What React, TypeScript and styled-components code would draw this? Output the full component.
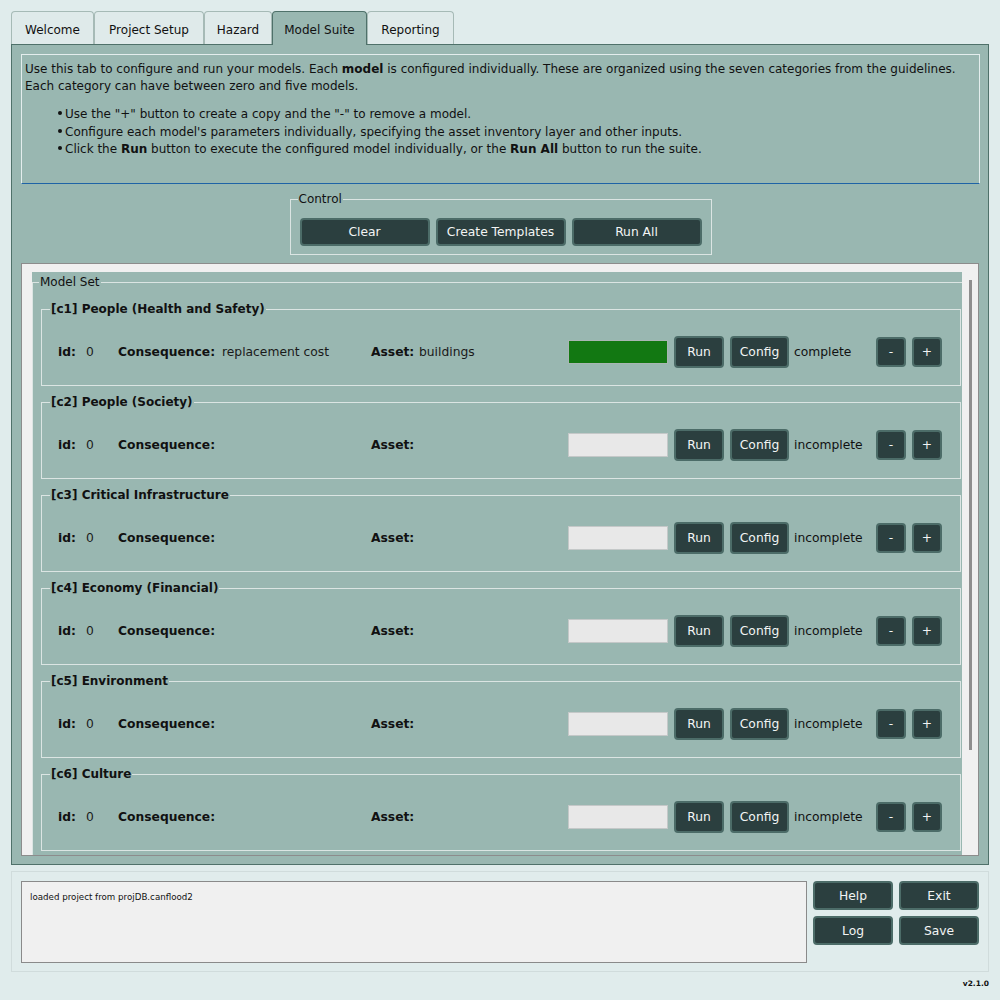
import React from "react";
import styled, { createGlobalStyle } from "styled-components";

const Global = createGlobalStyle`
  html, body { margin: 0; padding: 0; background: #e0ecec; }
  body { font-family: "DejaVu Sans", "Liberation Sans", sans-serif; color: #111; }
  * { box-sizing: border-box; }
`;

const Page = styled.div`
  width: 1000px;
  height: 1000px;
  padding: 11px 11px 0 11px;
  display: flex;
  flex-direction: column;
`;

const TabBar = styled.div`
  display: flex;
  height: 33px;
  align-items: flex-start;
`;

const Tab = styled.div<{ $w: number; $active?: boolean }>`
  width: ${(p) => p.$w}px;
  height: ${(p) => (p.$active ? 34 : 33)}px;
  margin-bottom: ${(p) => (p.$active ? -1 : 0)}px;
  position: relative;
  z-index: ${(p) => (p.$active ? 2 : 1)};
  display: flex;
  align-items: center;
  justify-content: center;
  padding-top: ${(p) => (p.$active ? 3 : 3)}px;
  font-size: 12px;
  color: #111;
  background: ${(p) => (p.$active ? "#99b7b1" : "#dfeaea")};
  border: 1px solid ${(p) => (p.$active ? "#4f716a" : "#a6bab6")};
  border-bottom: none;
  border-radius: 4px 4px 0 0;
`;

const Panel = styled.div`
  height: 821px;
  border: 1px solid #4f716a;
  background: #99b7b1;
  padding: 9px 8px 8px 9px;
  display: flex;
  flex-direction: column;
`;

const InfoBox = styled.div`
  height: 130px;
  flex: none;
  border: 1px solid #e4eded;
  border-bottom-color: #1f63a6;
  padding: 6px 3px 4px 3px;
  font-size: 12px;
  line-height: 17px;
  color: #111;
`;

const Para = styled.p`
  margin: 0;
`;

const BulletList = styled.ul`
  list-style: none;
  margin: 11px 0 0 0;
  padding: 0 0 0 40px;
  line-height: 17.5px;
`;

const Bullet = styled.li`
  &::before {
    content: "";
    display: inline-block;
    width: 4px;
    height: 4px;
    border-radius: 50%;
    background: #111;
    margin: 0 3px 3px -7px;
    vertical-align: middle;
  }
`;

const Group = styled.fieldset<{ $w?: number }>`
  margin: 0;
  min-width: 0;
  border: 1px solid #dbe5e3;
  ${(p) => (p.$w ? `width: ${p.$w}px;` : "")}
`;

const GroupTitle = styled.legend<{ $bold?: boolean; $offset: number }>`
  margin-left: ${(p) => p.$offset}px;
  padding: 0 1px;
  font-size: 12px;
  line-height: ${(p) => (p.$bold ? 16 : 14)}px;
  font-weight: ${(p) => (p.$bold ? 700 : 400)};
  color: #111;
`;

const ControlGroup = styled(Group)`
  margin-top: 8px;
  align-self: center;
  padding: 12px 9px 8px 9px;
  flex: none;
`;

const ButtonRow = styled.div`
  display: flex;
  gap: 6px;
`;

const DarkButton = styled.button<{ $w: number; $h: number }>`
  width: ${(p) => p.$w}px;
  height: ${(p) => p.$h}px;
  background: #2b3f3f;
  border: 2px solid #4c6c68;
  border-radius: 4px;
  color: #f2f4f4;
  font-family: "DejaVu Sans", sans-serif;
  font-size: 12.3px;
  padding: 0;
  display: flex;
  align-items: center;
  justify-content: center;
`;

const ScrollFrame = styled.div`
  margin-top: 8px;
  margin-right: 1px;
  flex: 1;
  min-height: 0;
  border: 1px solid #8c8c8c;
  background: #f0f0f0;
  display: flex;
`;

const Viewport = styled.div`
  flex: 1;
  padding: 8px 0 0 10px;
  overflow: hidden;
`;

const Content = styled.div`
  width: 938px;
  background: #99b7b1;
  padding-top: 3px;
  min-height: 600px;
`;

const ModelSet = styled(Group)`
  padding: 12px 8px 8px 8px;
`;

const Category = styled(Group)`
  width: 920px;
  padding: 19px 0 17px 16px;
  & + & {
    margin-top: 8px;
  }
`;

const Row = styled.div`
  display: grid;
  grid-template-columns: 28px 32px 104px 149px 48px 149px 106px 56px 64px 82px 36px 30px;
  align-items: center;
  height: 32px;
`;

const FieldLabel = styled.span`
  font-size: 12.3px;
  font-weight: 700;
  color: #111;
  white-space: nowrap;
`;

const FieldValue = styled.span`
  font-size: 12.3px;
  color: #1a1a1a;
  white-space: nowrap;
`;

const Progress = styled.div<{ $done: boolean }>`
  width: 100px;
  height: 24px;
  border: 1px solid ${(p) => (p.$done ? "#a9b6b3" : "#c4c8c8")};
  background: ${(p) => (p.$done ? "#127812" : "#e8e8e8")};
`;

const Status = styled.span`
  font-size: 12.3px;
  color: #111;
  white-space: nowrap;
`;

const ScrollTrack = styled.div`
  width: 16px;
  flex: none;
  background: #f0f0f0;
  padding: 16px 0 0 7px;
`;

const ScrollHandle = styled.div`
  width: 3px;
  height: 470px;
  background: #8e8e8e;
`;

const BottomFrame = styled.div`
  margin-top: 6px;
  height: 101px;
  border: 1px solid #d0dcdc;
  padding: 9px 9px 8px 9px;
  display: flex;
  gap: 6px;
`;

const LogBox = styled.div`
  width: 786px;
  height: 82px;
  background: #f0f0f0;
  border: 1px solid #8a8a8a;
  padding: 9px 8px;
  font-size: 8.7px;
  line-height: 12px;
  color: #111;
`;

const ButtonGrid = styled.div`
  display: grid;
  grid-template-columns: 80px 80px;
  grid-auto-rows: 29px;
  gap: 6px;
`;

const Version = styled.div`
  margin-top: 7px;
  text-align: right;
  font-size: 7.5px;
  font-weight: 700;
  line-height: 10px;
  color: #111;
`;

type Model = {
  code: string;
  name: string;
  consequence: string;
  asset: string;
  done: boolean;
};

const models: Model[] = [
  { code: "c1", name: "People (Health and Safety)", consequence: "replacement cost", asset: "buildings", done: true },
  { code: "c2", name: "People (Society)", consequence: "", asset: "", done: false },
  { code: "c3", name: "Critical Infrastructure", consequence: "", asset: "", done: false },
  { code: "c4", name: "Economy (Financial)", consequence: "", asset: "", done: false },
  { code: "c5", name: "Environment", consequence: "", asset: "", done: false },
  { code: "c6", name: "Culture", consequence: "", asset: "", done: false },
];

const tabs = [
  { label: "Welcome", w: 83 },
  { label: "Project Setup", w: 110 },
  { label: "Hazard", w: 68 },
  { label: "Model Suite", w: 95, active: true },
  { label: "Reporting", w: 87 },
];

export default function App() {
  return (
    <>
      <Global />
      <Page>
        <TabBar>
          {tabs.map((t) => (
            <Tab key={t.label} $w={t.w} $active={t.active}>
              {t.label}
            </Tab>
          ))}
        </TabBar>
        <Panel>
          <InfoBox>
            <Para>
              Use this tab to configure and run your models. Each <b>model</b> is configured individually. These are
              organized using the seven categories from the guidelines.
              <br />
              Each category can have between zero and five models.
            </Para>
            <BulletList>
              <Bullet>Use the "+" button to create a copy and the "-" to remove a model.</Bullet>
              <Bullet>
                Configure each model's parameters individually, specifying the asset inventory layer and other inputs.
              </Bullet>
              <Bullet>
                Click the <b>Run</b> button to execute the configured model individually, or the <b>Run All</b> button
                to run the suite.
              </Bullet>
            </BulletList>
          </InfoBox>
          <ControlGroup $w={422}>
            <GroupTitle $offset={-2}>Control</GroupTitle>
            <ButtonRow>
              <DarkButton $w={130} $h={28}>Clear</DarkButton>
              <DarkButton $w={130} $h={28}>Create Templates</DarkButton>
              <DarkButton $w={130} $h={28}>Run All</DarkButton>
            </ButtonRow>
          </ControlGroup>
          <ScrollFrame>
            <Viewport>
              <Content>
                <ModelSet>
                  <GroupTitle $offset={-2}>Model Set</GroupTitle>
                  {models.map((m) => (
                    <Category key={m.code}>
                      <GroupTitle $bold $offset={-8}>
                        [{m.code}] {m.name}
                      </GroupTitle>
                      <Row>
                        <FieldLabel>id:</FieldLabel>
                        <FieldValue>0</FieldValue>
                        <FieldLabel>Consequence:</FieldLabel>
                        <FieldValue>{m.consequence}</FieldValue>
                        <FieldLabel>Asset:</FieldLabel>
                        <FieldValue>{m.asset}</FieldValue>
                        <Progress $done={m.done} />
                        <DarkButton $w={50} $h={32}>Run</DarkButton>
                        <DarkButton $w={59} $h={32}>Config</DarkButton>
                        <Status>{m.done ? "complete" : "incomplete"}</Status>
                        <DarkButton $w={30} $h={30}>-</DarkButton>
                        <DarkButton $w={30} $h={30}>+</DarkButton>
                      </Row>
                    </Category>
                  ))}
                </ModelSet>
              </Content>
            </Viewport>
            <ScrollTrack>
              <ScrollHandle />
            </ScrollTrack>
          </ScrollFrame>
        </Panel>
        <BottomFrame>
          <LogBox>loaded project from projDB.canflood2</LogBox>
          <ButtonGrid>
            <DarkButton $w={80} $h={29}>Help</DarkButton>
            <DarkButton $w={80} $h={29}>Exit</DarkButton>
            <DarkButton $w={80} $h={29}>Log</DarkButton>
            <DarkButton $w={80} $h={29}>Save</DarkButton>
          </ButtonGrid>
        </BottomFrame>
        <Version>v2.1.0</Version>
      </Page>
    </>
  );
}
